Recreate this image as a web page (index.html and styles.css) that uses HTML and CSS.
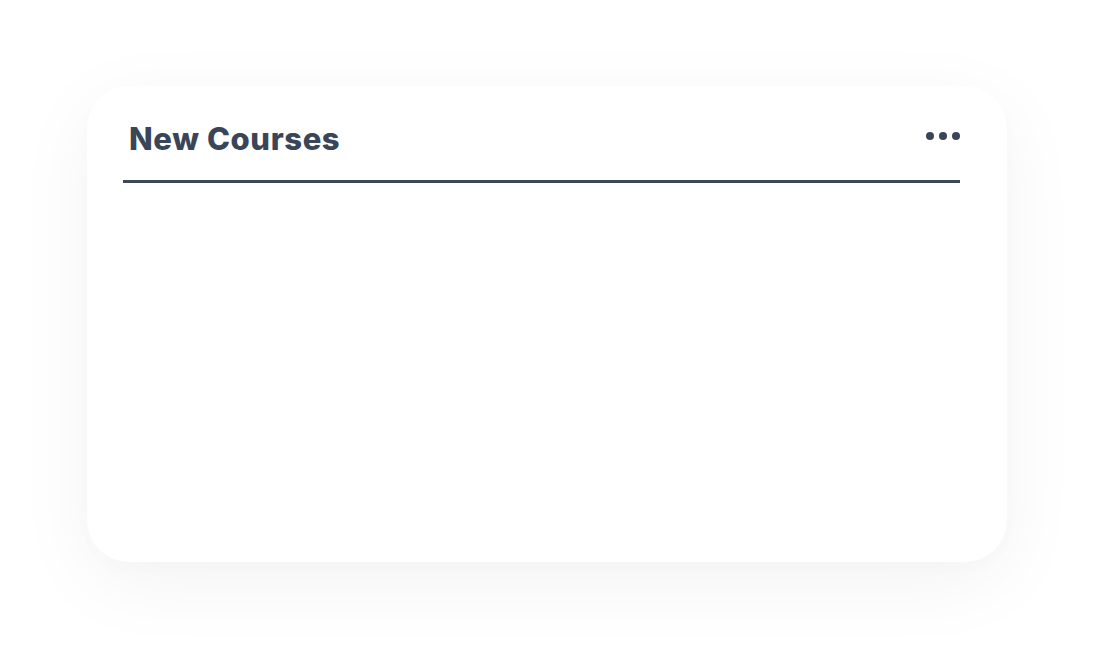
FILE: index.html
```html
<!DOCTYPE html>
<html lang="en">
<head>
<meta charset="utf-8">
<title>New Courses</title>
<link rel="stylesheet" href="styles.css">
</head>
<body>
<main class="page">
  <section class="card">
    <header class="card-header">
      <h2 class="card-title">New Courses</h2>
      <button class="more" aria-label="More options">
        <span class="dot"></span><span class="dot"></span><span class="dot"></span>
      </button>
    </header>
    <div class="divider"></div>
    <div class="card-body"></div>
  </section>
</main>
</body>
</html>
```

FILE: styles.css
```css
html, body {
  margin: 0;
  padding: 0;
  background: #ffffff;
}

.page {
  width: 1094px;
  height: 649px;
  padding: 86px 0 0 87px;
  box-sizing: border-box;
}

.card {
  width: 920px;
  height: 476px;
  box-sizing: border-box;
  background: #ffffff;
  border-radius: 42px;
  box-shadow: 0 20px 80px rgba(0, 0, 0, 0.05), 0 6px 24px rgba(0, 0, 0, 0.012);
  padding: 34px 47px 0 36px;
  display: flex;
  flex-direction: column;
}

.card-header {
  display: flex;
  align-items: center;
  justify-content: space-between;
  height: 38px;
  padding-left: 6px;
}

.card-title {
  margin: 0;
  font-family: Inter, "Noto Sans", sans-serif;
  font-weight: 800;
  font-size: 31px;
  letter-spacing: 0.6px;
  color: #3a4557;
  line-height: 36px;
}

.more {
  border: 0;
  background: none;
  padding: 0;
  display: flex;
  gap: 5px;
  align-items: center;
  cursor: pointer;
  margin-top: -6px;
}

.dot {
  width: 8px;
  height: 8px;
  border-radius: 50%;
  background: #3a4557;
}

.divider {
  margin-top: 22px;
  height: 3px;
  background: #3d4758;
}

.card-body {
  flex: 1;
}
```
